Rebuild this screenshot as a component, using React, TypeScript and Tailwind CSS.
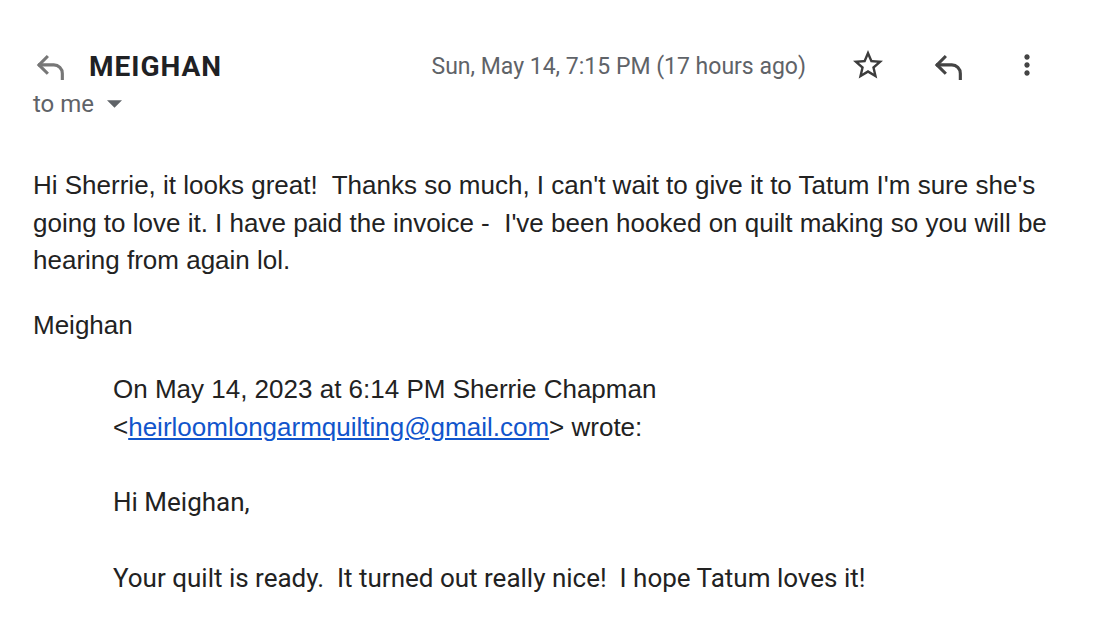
const ReplyOutline = ({ className }: { className?: string }) => (
  <svg viewBox="0 0 24 24" className={className} fill="none" stroke="currentColor" strokeWidth={2.2} strokeLinecap="square">
    <path d="M9 5 3.5 10.5 9 16" />
    <path d="M4 10.5h10a6 6 0 0 1 6 6V20" />
  </svg>
);

const StarBorder = ({ className }: { className?: string }) => (
  <svg viewBox="0 0 24 24" className={className} fill="currentColor">
    <path d="M22 9.24l-7.19-.62L12 2 9.19 8.63 2 9.24l5.46 4.73L5.82 21 12 17.27 18.18 21l-1.63-7.03L22 9.24zM12 15.4l-3.76 2.27 1-4.28-3.32-2.88 4.38-.38L12 6.1l1.71 4.04 4.38.38-3.32 2.88 1 4.28L12 15.4z" />
  </svg>
);

const MoreVert = ({ className }: { className?: string }) => (
  <svg viewBox="0 0 24 24" className={className} fill="currentColor">
    <path d="M12 8c1.1 0 2-.9 2-2s-.9-2-2-2-2 .9-2 2 .9 2 2 2zm0 2c-1.1 0-2 .9-2 2s.9 2 2 2 2-.9 2-2-.9-2-2-2zm0 6c-1.1 0-2 .9-2 2s.9 2 2 2 2-.9 2-2-.9-2-2-2z" />
  </svg>
);

export default function App() {
  return (
    <div className="w-[1100px] h-[630px] bg-white overflow-hidden font-['Liberation_Sans',Arial,sans-serif] text-[#222]">
      <div className="flex items-center pt-[46px] pl-[34px] pr-[57px]">
        <ReplyOutline className="w-[34px] h-[34px] text-[#777]" />
        <div className="ml-[21px] font-['Roboto',sans-serif] font-bold text-[28px] tracking-[1px] text-[#202124]">MEIGHAN</div>
        <div className="ml-auto font-['Roboto',sans-serif] text-[23px] text-[#5f6368]">Sun, May 14, 7:15 PM (17 hours ago)</div>
        <StarBorder className="ml-[44px] w-[36px] h-[36px] text-[#3c3c3c] -translate-y-[2px]" />
        <ReplyOutline className="ml-[46px] w-[34px] h-[34px] text-[#444]" />
        <MoreVert className="ml-[45px] w-[32px] h-[32px] text-[#444] -translate-y-[2px]" />
      </div>
      <div className="flex items-center pl-[33px] mt-[-2px] font-['Roboto',sans-serif] text-[24px] text-[#5f6368]">
        <span>to me</span>
        <svg viewBox="0 0 10 5" className="ml-[13px] w-[15px] h-[8px] fill-[#5f6368]"><path d="M0 0h10L5 5z" /></svg>
      </div>
      <div className="pl-[33px] pr-[40px] mt-[45px] text-[26px] leading-[37.5px]">
        <p className="whitespace-pre-wrap">{"Hi Sherrie, it looks great!  Thanks so much, I can't wait to give it to Tatum I'm sure she's going to love it. I have paid the invoice -  I've been hooked on quilt making so you will be hearing from again lol."}</p>
        <p className="mt-[27px]">Meighan</p>
        <div className="pl-[80px] mt-[26px] leading-[38px]">
          <p>On May 14, 2023 at 6:14 PM Sherrie Chapman</p>
          <p>&lt;<a href="#" className="text-[#1155cc] underline">heirloomlongarmquilting@gmail.com</a>&gt; wrote:</p>
          <p className="mt-[37px] font-['Roboto',sans-serif]">Hi Meighan,</p>
          <p className="mt-[38px] font-['Roboto',sans-serif] whitespace-pre-wrap">{"Your quilt is ready.  It turned out really nice!  I hope Tatum loves it!"}</p>
        </div>
      </div>
    </div>
  );
}
